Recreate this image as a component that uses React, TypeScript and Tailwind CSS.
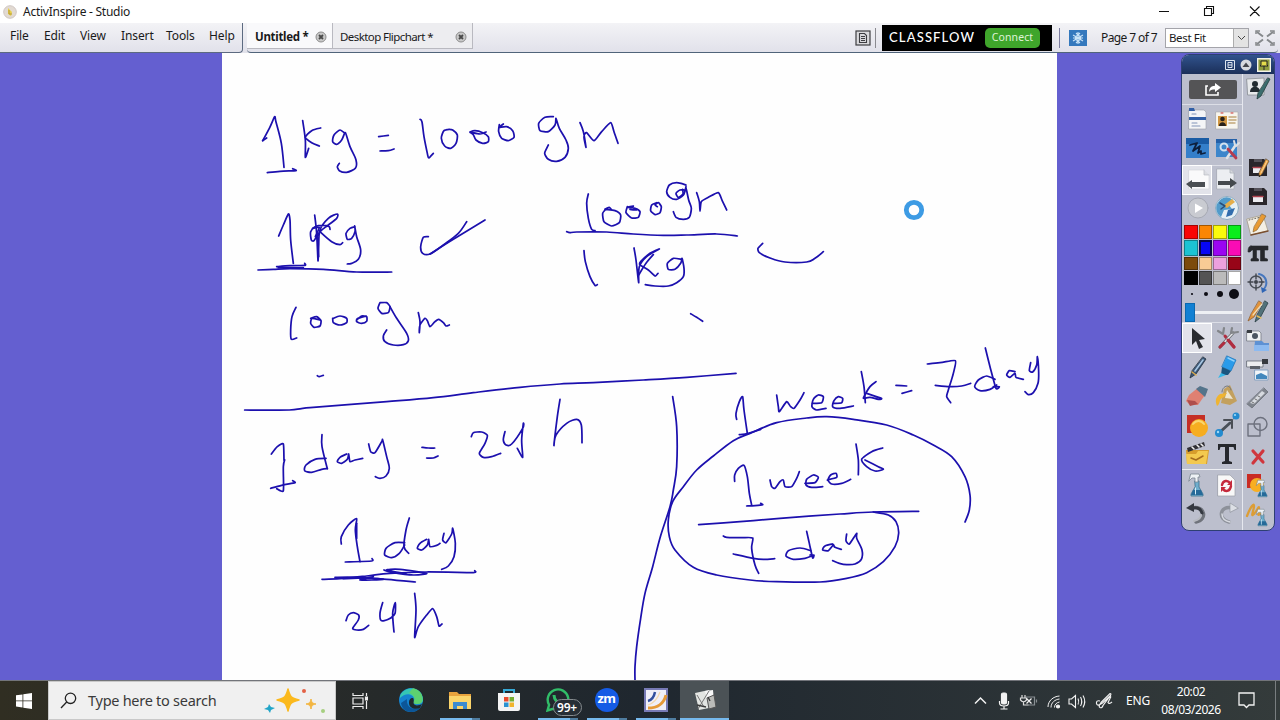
import type {ReactNode} from "react";

type InkGroup = {x: number; y: number; strokes: string[]};

// pen samples are stored at 3x board resolution, relative to the group's origin
const INK: InkGroup[] = [
  {x: 240, y: 100, strokes: [
    "68,122 88,85 104,50 108,66 124,130 132,202", "82,218 120,214 168,212 158,206", "68,122 80,114",
    "188,62 196,120 196,172 206,145", "242,84 215,92 196,112 215,128 238,138",
    "315,100 300,90 282,105 278,125 290,133 305,120 316,98 330,140 348,180 346,205 320,217 298,212 292,200 298,190",
    "416,110 445,106", "420,153 445,152 462,147",
    "540,58 546,66 552,110 562,160 566,174 580,160",
    "630,88 612,92 604,115 614,138 632,145 648,130 652,105 638,90 626,88",
    "690,96 705,92 728,98 745,110 745,125 728,130 708,120 700,104 690,96 720,102 738,96",
    "778,74 776,95 785,115 805,122 822,112 818,92 800,80 778,82 790,72",
    "940,50 915,52 896,70 900,92 925,95 945,75 948,55 958,85 978,120 985,145 975,172 950,184 925,178 914,160 920,145 925,135",
    "1020,68 1030,95 1038,142 1032,110 1040,98 1062,122 1085,95 1112,68 1122,95 1134,130",
    "116,408 130,375 145,342 150,360 152,420 160,490", "110,500 150,497 195,496 194,490",
    "54,510 100,508 150,506 250,508 350,516 455,516", "115,503 190,503",
    "224,345 230,400 234,482 236,440 240,390 265,355 292,342 290,355 265,375 240,395 222,422 214,420 212,395 225,380 250,376 268,380 270,388",
    "240,395 275,425 300,434 308,428", "232,400 236,470", "218,385 238,382 226,410",
    "345,380 330,385 318,400 322,418 335,415 345,395 344,378 350,410 362,450 355,478 335,490 322,492",
    "565,410 550,412 542,440 548,460 570,462 610,435 655,400 680,365", "570,462 640,418 735,360",
    "168,622 156,650 152,690 154,718 170,714",
    "212,655 230,650 243,662 240,678 222,682 212,670 216,655 240,660",
    "280,655 300,648 320,655 320,668 300,675 280,668 278,655",
    "350,660 365,648 380,650 380,664 365,670 350,665 352,656 378,648",
    "420,608 414,625 425,640 445,638 450,620 440,608 420,608",
    "450,620 470,655 500,700 505,722 490,734 460,735 435,725 430,708 440,690",
    "535,638 540,665 538,698 540,675 555,655 562,662 570,680 585,665 596,658 610,668 618,678 628,675",
    "232,827 238,830 250,826",
  ]},
  {x: 540, y: 160, strokes: [
    "145,102 140,130 145,175 155,208 165,212",
    "80,215 90,218 110,216 200,216 280,222 370,226 440,225 530,222 592,228",
    "200,145 188,160 192,185 215,198 238,188 242,165 225,152 195,148 208,142 215,150",
    "262,140 258,158 275,174 295,172 300,155 285,145 262,142 280,138 270,148 290,150",
    "350,128 335,135 332,152 345,164 360,158 364,140 355,128 345,135 352,140",
    "438,75 410,68 388,75 380,95 390,112 410,118 430,105 438,80 435,90 420,90 408,100 415,112 432,100 438,85 446,120 454,145 448,172 430,178 408,172 400,155",
    "428,88 430,104", "470,98 478,125 480,154 484,125 505,112 535,98 548,125 560,150",
    "132,272 136,305 150,350 165,376 172,374",
    "282,264 288,300 296,368 298,320 320,290 358,267 330,280 302,305 300,315 325,330 345,348 354,340",
    "296,345 318,310 340,284",
    "425,298 400,295 382,310 385,328 405,328 422,310 426,295 432,325 430,350 410,368 385,378 345,378 316,374",
    "668,250 654,265 658,278 690,294 735,306 800,306 825,295 850,275",
    "452,461 470,472 488,484",
  ]},
  {x: 240, y: 380, strokes: [
    "14,90 148,90 210,83 440,65 580,53 700,38 840,22 960,12 1060,8 1210,0 1340,-8 1488,-20",
    "94,222 112,200 130,192 132,240 134,240 130,260 130,332 110,326", "92,325 125,316 165,308 158,302",
    "246,164 246,200 262,266", "258,235 225,238 198,255 194,272 215,277 245,268 262,266",
    "320,222 300,232 292,245 305,250 322,238 326,222 330,245 345,240 368,235",
    "386,192 392,215 405,218 425,185 428,180 440,230 448,265 438,288 420,295 406,290",
    "546,202 565,204 584,204", "560,234 580,234 594,228",
    "694,170 700,158 725,156 742,166 735,190 718,220 730,232 755,230 782,220",
    "795,155 790,180 798,195 815,192 848,145 850,130 845,180 848,232 832,205",
    "960,58 952,110 942,196 948,165 980,130 1010,118 1024,135 1026,188",
    "304,492 304,470 325,435 350,416 346,450 352,500 360,545", "316,546 395,543 396,536", "350,430 350,475",
    "508,414 498,450 492,500 506,520", "494,488 465,488 438,505 434,525 455,533 478,520 494,495",
    "560,478 540,490 532,505 545,510 562,495 566,478 570,500 590,496 600,490",
    "612,460 608,480 618,488 635,462 638,445 646,490 642,530 625,558 605,568",
    "246,598 300,596 380,588 450,580 560,576 700,578 704,572",
    "432,570 460,578 520,585 560,580 480,568 440,570 500,582",
    "285,592 350,592 440,598 526,606", "310,596 380,594 430,598 360,600 400,590",
    "318,722 325,705 340,698 356,705 355,720 338,745 350,750 370,748 386,736",
    "428,668 420,700 424,722 445,718 465,700 466,668 458,700 462,756",
    "524,640 528,690 524,772 535,740 560,705 578,686 590,710 597,738 606,732",
  ]},
  {x: 640, y: 340, strokes: [
    "98,170 110,260 110,380 100,450 90,500 60,594 38,680 15,760 2,835 -10,920 -15,980 -15,1020",
    "975,546 988,510 990,465 975,410 935,350 880,315 820,285 740,255 640,238 560,230 500,234 410,248 330,280 280,302 220,348 170,390 130,440 98,485 85,540 88,590 105,630 160,682 230,705 330,720 410,725 540,726 620,715 680,698 730,665 765,620 776,580 768,545 745,525 700,516",
    "176,554 300,545 420,535 600,522 700,516 836,514",
    "290,238 288,220 298,185 308,170 312,210 322,280", "298,284 325,280 362,268",
    "410,165 415,200 418,215 440,185 452,200 462,205 480,180 492,158",
    "516,190 545,188 550,170 535,165 520,178 516,200 530,210 558,205",
    "582,190 605,188 608,175 595,170 582,182 578,200 600,205 640,198",
    "664,95 672,140 676,188", "708,125 690,140 672,170 672,175 690,172 715,178 724,175 680,160",
    "768,136 800,138", "786,160 815,152",
    "862,72 900,68 946,62 940,100 925,150 920,170 932,188", "886,136 930,140 965,138 992,130",
    "1036,24 1050,80 1068,145 1078,140 1060,140", "1065,118 1040,108 1015,120 1004,140 1020,152 1050,148 1070,135",
    "1125,95 1108,92 1100,105 1110,112 1125,100 1128,112 1150,118",
    "1172,68 1168,92 1178,96 1190,75 1192,50 1196,95 1194,130 1180,158 1165,164 1155,155",
    "284,424 284,405 295,385 312,376 322,410 328,460 335,495", "320,498 345,497 368,494 362,490",
    "390,420 395,440 405,445 420,425 430,420 435,440 455,440 470,415 478,395",
    "495,430 525,428 535,412 520,405 500,418 498,435 515,442 548,440",
    "562,420 590,412 588,400 572,405 564,420 575,432 605,430 632,418",
    "648,312 655,360 655,404", "728,324 695,335 665,358 680,380 705,393 730,388 715,380 675,360",
    "250,588 260,592 300,593 338,594 335,625 345,675 356,700", "280,642 340,655 370,658 404,656",
    "500,574 508,610 518,654 522,645 510,645", "512,632 480,624 445,632 438,648 460,658 495,655 515,648",
    "578,612 555,618 548,630 565,632 580,615 585,622 604,628",
    "620,582 618,602 628,612 650,580 650,595 666,630 664,658 645,672 620,674 598,670 578,662",
  ]},
];

// Catmull-Rom through the samples, tighter where the pen turns sharply
function smooth(stroke: string) {
  const p = stroke.split(" ").map(s => s.split(",").map(Number));
  const tangent = (i: number) => {
    const a = p[i - 1] ?? p[i], b = p[i], c = p[i + 1] ?? p[i];
    const ux = b[0] - a[0], uy = b[1] - a[1], vx = c[0] - b[0], vy = c[1] - b[1];
    const cos = (ux * vx + uy * vy) / (Math.hypot(ux, uy) * Math.hypot(vx, vy) || 1);
    const k = cos > 0.7 ? 6 : 10;
    return [(c[0] - a[0]) / k, (c[1] - a[1]) / k];
  };
  let d = `M${p[0][0]} ${p[0][1]}`;
  for (let i = 0; i < p.length - 1; i++) {
    const b = p[i], c = p[i + 1];
    const t = tangent(i), u = tangent(i + 1);
    d += `C${b[0] + t[0]} ${b[1] + t[1]} ${c[0] - u[0]} ${c[1] - u[1]} ${c[0]} ${c[1]}`;
  }
  return d;
}

function Board() {
  return (
    <svg viewBox="222 53 835 627" className="w-[835px] h-[627px] shrink-0 bg-[#fefefe]">
      {INK.map((g, i) => (
        <g key={i} transform={`translate(${g.x} ${g.y}) scale(0.33333)`} fill="none" stroke="#1c10ae" strokeWidth="5.2" strokeLinecap="round" strokeLinejoin="round">
          {g.strokes.map((s, j) => <path key={j} d={smooth(s)} />)}
        </g>
      ))}
      <circle cx="914" cy="210" r="7.7" fill="none" stroke="#3d9be4" strokeWidth="4.8" />
    </svg>
  );
}

function TabClose() {
  return (
    <svg viewBox="0 0 12 12" className="size-3">
      <circle cx="6" cy="6" r="5" fill="#c9c9c9" stroke="#8d8d8d" />
      <path d="M4 4l4 4M8 4l-4 4" stroke="#4a4a4a" strokeWidth="1.8" />
    </svg>
  );
}

function TitleBar() {
  return (
    <div className="h-[23px] flex items-center bg-white pl-[3px]">
      <svg viewBox="0 0 14 14" className="size-[14px]">
        <circle cx="7" cy="7" r="6.3" fill="#e2dad2" stroke="#d0c6c2" />
        <path d="M5 3l4 4-1 4-3-2z" fill="#e6cf4c" />
        <path d="M6 5v4h3" fill="none" stroke="#b89a35" />
      </svg>
      <span className="ml-[6px] text-[12px] tracking-[-0.25px]">ActivInspire - Studio</span>
      <svg viewBox="0 0 120 20" className="ml-auto mr-[10px] w-[120px] h-5" fill="none" stroke="#111" strokeWidth="1.1">
        <path d="M9 9.500h10M54.500 6.500h7v7h-7zM56.500 6.500v-2h7v7h-2M100 4.500l9.500 9.500M109.500 4.500l-9.500 9.500" />
      </svg>
    </div>
  );
}

function MenuBar() {
  return (
    <div className="h-[30px] flex bg-gradient-to-b from-[#f3f3f6] to-[#e1e1ea]">
      <div className="w-[243px] h-[30px] flex pl-[10px] pt-[4px] text-[12px] tracking-[-0.1px] border-r border-b border-[#5c6a80] rounded-br">
        <span className="w-[34px]">File</span>
        <span className="w-9">Edit</span>
        <span className="w-[41px]">View</span>
        <span className="w-[45px]">Insert</span>
        <span className="w-[43px]">Tools</span>
        <span>Help</span>
      </div>
      <div className="flex-1 ml-1 mr-[2px] flex border-b border-[#50647a] rounded-b">
        <div className="w-[86px] h-[26px] bg-[#f9f9fb] border-b border-r border-[#b9b9c0] flex items-center pl-2 pr-[5px] justify-between text-[11.5px] pt-[3px]">
          <span className="font-bold tracking-[-0.3px] whitespace-nowrap">Untitled *</span>
          <TabClose />
        </div>
        <div className="w-[140px] h-[26px] bg-[#ededf0] border-b border-r border-[#b9b9c0] flex items-center pl-[7px] pr-[5px] justify-between text-[11.5px] tracking-[-0.58px] pt-[3px]">
          <span>Desktop Flipchart *</span>
          <TabClose />
        </div>
        <div className="ml-auto flex items-center h-[29px]">
          <svg viewBox="0 0 16 16" className="size-4" fill="none" stroke="#3e3e42">
            <rect x="1" y="1" width="14" height="14" fill="#dadadd" strokeWidth="1.2" />
            <path d="M4.500 3.500h5l2 2v7h-7zM6 6.500h4M6 8.500h4M6 10.500h4" strokeWidth="1.1" />
          </svg>
          <div className="w-px h-5 bg-[#8a8a90] ml-1" />
          <div className="ml-[6px] w-[170px] h-[26px] bg-black flex items-center pl-[7px] text-white">
            <span className="font-[Lato] font-medium text-[13px] tracking-[1.15px] w-[96px]">CLASSFLOW</span>
            <span className="w-[55px] h-5 rounded-[5px] bg-[#3fa52b] text-[10.5px] tracking-[0.1px] flex items-center justify-center text-[#dff3d8]">Connect</span>
          </div>
          <div className="w-px h-5 bg-[#7d7da0] ml-[7px]" />
          <svg viewBox="0 0 18 16" className="w-[18px] h-4 ml-[9px]">
            <rect width="18" height="16" fill="#3478bd" />
            <g fill="none" stroke="#c9e3f7" strokeWidth="1.1">
              <circle cx="9" cy="8" r="2.500" />
              <path d="M9 2v12M4 5l10 6M4 11l10-6M7 3l2 2 2-2M7 13l2-2 2 2M4 8h10" />
            </g>
          </svg>
          <span className="ml-[14px] w-[64px] text-[12px] tracking-[-0.6px] whitespace-nowrap">Page 7 of 7</span>
          <div className="w-[84px] h-5 border border-[#a4a4aa] bg-white flex items-center justify-between pl-[3px] text-[11.5px] tracking-[-0.35px]">
            <span>Best Fit</span>
            <span className="w-[15px] h-[18px] bg-[#e3e3e3] border-l border-[#adadad] flex items-center justify-center">
              <svg viewBox="0 0 9 6" className="w-[9px] h-[6px]"><path d="M1 1l3.500 3.500L8 1" fill="none" stroke="#444" /></svg>
            </span>
          </div>
          <svg viewBox="0 0 20 16" className="w-5 h-4 ml-[6px] mr-[3px]" fill="none" stroke="#85888b" strokeWidth="2">
            <path d="M2 2l6 4.500M18 2l-6 4.500M2 14l6-4.500M18 14l-6-4.500" />
            <path d="M1 4V1h4M19 4V1h-4M1 12v3h4M19 12v3h-4" strokeWidth="1.500" />
          </svg>
        </div>
      </div>
    </div>
  );
}

function Icon({children, on}: {children: ReactNode; on?: boolean}) {
  return (
    <svg viewBox="0 0 28 28" className={on ? "size-7 bg-[#e2e3ea] outline outline-white" : "size-7"} strokeLinecap="round" strokeLinejoin="round">
      {children}
    </svg>
  );
}

function Floppy() {
  return (
    <g>
      <path d="M5 6h15l3 3v14H5z" fill="#29262b" />
      <rect x="9" y="14" width="10" height="6" fill="#ececf0" />
      <path d="M9 14.500h10" stroke="#b0434f" strokeWidth="1.500" />
      <path d="M10 6h8v3h-8z" fill="#55525a" />
    </g>
  );
}

function Spray() {
  return (
    <g>
      <path d="M12 10h4v6l4 7v2H8v-2l4-7z" fill="#6faecd" stroke="#3d718e" strokeWidth=".8" />
      <path d="M10 19h8l2 5H8z" fill="#256a99" />
      <path d="M8 3h8l1 3h-2v5h-3V7H9L6 10z" fill="#eef2f5" stroke="#7c8993" strokeWidth=".8" />
      <path d="M12.500 17v6" stroke="#d5edf6" />
    </g>
  );
}

function Pencil({color}: {color: string}) {
  return (
    <g>
      <path d="M22 6l3 2-7 13-3 3v-4z" fill={color} stroke="#5a4937" strokeWidth=".7" />
      <path d="M23 8l-6 12" stroke="#fff" strokeOpacity=".6" strokeWidth=".9" />
      <path d="M15 24v-2l2 1z" fill="#222" />
    </g>
  );
}

const COLORS = [
  "bg-[#f90505]", "bg-[#fb8604]", "bg-[#fbfb0c]", "bg-[#0aed1c]",
  "bg-[#1cc3d3]", "bg-[#0606f4]", "bg-[#9a05f2]", "bg-[#f90cb5]",
  "bg-[#7c4b0b]", "bg-[#f8cb95]", "bg-[#eca0dd]", "bg-[#980518]",
  "bg-black", "bg-[#545454]", "bg-[#bbbbbb]", "bg-white",
];

function Palette() {
  return (
    <div className="absolute left-[1181px] top-[54px] w-[94px] h-[477px] rounded-lg bg-[#bcbfcd] border border-[#2e3f73] overflow-hidden flex flex-col">
      <div className="h-[19px] shrink-0 bg-gradient-to-b from-[#31538d] to-[#1b2f59] flex items-center justify-end gap-[5px] pr-[3px]">
        <svg viewBox="0 0 10 10" className="size-[10px]" fill="none" stroke="#dce4ef">
          <path d="M.500.500h9v9h-9zM3 2.500h4v5H3zM3 5h4" />
        </svg>
        <svg viewBox="0 0 12 12" className="size-3">
          <circle cx="6" cy="6" r="5.500" fill="#d8dade" />
          <path d="M2.500 8L6 3.500 9.500 8z" fill="#45474c" />
        </svg>
        <svg viewBox="0 0 14 14" className="size-[14px]">
          <path d="M.700.700h12.600v12.600H.700z" fill="#8e9b3e" stroke="#f4f4e8" strokeWidth="1.400" />
          <path d="M4 3h6v4l1 1H3l1-1zM7 8v4" fill="#e4dc4c" stroke="#222" />
        </svg>
      </div>
      <div className="flex-1 flex">
        <div className="w-[60px] flex flex-col">
          <div className="h-[30px] flex items-center justify-center pl-[2px]">
            <div className="w-12 h-[19px] rounded-xs bg-[#545456] flex items-center justify-center">
              <svg viewBox="0 0 18 14" className="w-[18px] h-[14px]">
                <path d="M4 4H2v9h12v-3" fill="none" stroke="#fff" strokeWidth="1.600" />
                <path d="M11 1l6 4.500-6 4.500V7.500c-3 0-5 .5-6 2.500 0-4 2-6 6-6.300z" fill="#fff" />
              </svg>
            </div>
          </div>
          <div className="h-px bg-[#dcdee6]" />
          <div className="h-[60px] grid grid-cols-2 justify-items-center content-start gap-y-[2px]">
            <Icon>
              <path d="M6 5h15l2 2v17H6z" fill="#f4f5f7" stroke="#9a9fa8" strokeWidth=".6" />
              <path d="M6 3h5l1 3H6z" fill="#315fa6" />
              <path d="M6 12h17v3H6z" fill="#315fa6" />
              <path d="M9 9h4M9 18h5M9 21h8" stroke="#8094b8" strokeWidth="1.100" />
            </Icon>
            <Icon>
              <path d="M3 7h22v17H3z" fill="#f7f5ee" stroke="#a9a9a9" strokeWidth=".6" />
              <path d="M5 11h9v10H5z" fill="#cf9541" />
              <circle cx="9.500" cy="14" r="2.300" fill="#282119" />
              <path d="M6 21c0-5 7-5 7 0z" fill="#282119" />
              <path d="M16 12h7M16 15h7M16 18h6" stroke="#c2a778" strokeWidth="1.500" />
              <path d="M8 8h2M18 8h2" stroke="#c33" />
            </Icon>
            <Icon>
              <path d="M3 3h23v20H3z" fill="#347fca" />
              <path d="M3 3h23v6H3z" fill="#195ba4" />
              <path d="M7 10l7-2-4 8 7-5-2 7 3-2 0 3 4-1" fill="none" stroke="#0d1f3c" strokeWidth="1.800" />
            </Icon>
            <Icon>
              <path d="M3 4h21v18H3z" fill="#3d86cb" />
              <path d="M3 4h21v4H3z" fill="#2460a8" />
              <circle cx="11" cy="12" r="3.500" fill="none" stroke="#d3e2ef" strokeWidth="2" />
              <path d="M14 23L22 11" stroke="#dfe2e6" strokeWidth="2.600" />
              <path d="M15 14l8 9" stroke="#b63c50" strokeWidth="2.800" />
              <path d="M22 10l-1-4M23 11l3-3" stroke="#dde1e5" strokeWidth="2" />
            </Icon>
          </div>
          <div className="h-px bg-[#dcdee6]" />
          <div className="h-[59px] grid grid-cols-2 justify-items-center content-start">
            <Icon on>
              <path d="M6 4h15l5 5v14H6z" fill="#fafafb" stroke="#d5d7dc" strokeWidth=".7" />
              <path d="M21 4v5h5" fill="#dcdde2" stroke="#b9bcc4" strokeWidth=".7" />
              <path d="M3 18l6-4v2h13v5H9v2z" fill="#4b4f53" />
            </Icon>
            <Icon>
              <path d="M4 3h13l4 4v16H4z" fill="#eceef2" stroke="#a7acb5" strokeWidth=".7" />
              <path d="M17 3v4h4" fill="#d6d8de" stroke="#a7acb5" strokeWidth=".7" />
              <path d="M5 15h12v-3l7 5-7 5v-3H5z" fill="#454a4e" />
            </Icon>
            <Icon>
              <circle cx="15" cy="14" r="10" fill="#c9cbd1" stroke="#a7aab4" />
              <path d="M12 9.500l8 4.500-8 5z" fill="#fff" />
            </Icon>
            <Icon>
              <circle cx="14" cy="14" r="11.500" fill="#e6f0f5" stroke="#8cabc0" />
              <path d="M4 10c5-8 11-8 16-4l-4 5 3 4-8 1-3 7c-4-3-6-8-4-13z" fill="#529bca" />
              <path d="M10 12l9-7 3 3-8 6z" fill="#e4ae4b" />
              <path d="M15 16l7-2-3 7-6 2z" fill="#316dad" />
              <path d="M7 9l5 3-4 3" stroke="#274e7b" strokeWidth="1.500" fill="none" />
            </Icon>
          </div>
          <div className="h-[60px] pl-[2px] pr-px grid grid-cols-4 gap-px">
            {COLORS.map((c, i) => (
              <div key={i} className={`${c} ${i === 5 ? "border-2 border-[#06064c]" : "border border-black/35"}`} />
            ))}
          </div>
          <svg viewBox="0 0 60 17" className="h-[17px] w-[60px] shrink-0" fill="#0d0d14">
            <circle cx="10" cy="9" r="1.100" /><circle cx="24" cy="9" r="2" />
            <circle cx="38" cy="9" r="3" /><circle cx="52" cy="9" r="5" />
          </svg>
          <div className="h-[20px] flex items-center pl-[3px]">
            <div className="w-[10px] h-[19px] bg-[#1180d3] border border-[#0b69b0]" />
            <div className="flex-1 h-[3px] bg-[#eef0f4]" />
          </div>
          <div className="h-px bg-[#dcdee6]" />
          <div className="h-[146px] grid grid-cols-2 justify-items-center content-start gap-y-px pt-px">
            <Icon on>
              <path d="M9 4l13 11-6 1 4 7-4 2-3-8-4 4z" fill="#292b2f" />
            </Icon>
            <Icon>
              <path d="M12 12l9 11" stroke="#b02d40" strokeWidth="3" />
              <path d="M20 9L7 23" stroke="#6d7176" strokeWidth="3.200" />
              <path d="M20 9L7 23" stroke="#e4e6e9" strokeWidth="1.500" />
              <path d="M15 16l6 7M11 19l-4 4" stroke="#b02d40" strokeWidth="3" />
              <path d="M5 7l5 3 1-6M19 4l-1 5 7-1" fill="none" stroke="#83868a" strokeWidth="2.200" />
            </Icon>
            <Icon>
              <path d="M20 4l3 2-10 15-6 4 2-7z" fill="#3c5877" stroke="#24313f" strokeWidth=".8" />
              <path d="M20 7L12 18" stroke="#a9c8e3" strokeWidth="1.600" />
              <path d="M9 19l4 3" stroke="#dcab49" strokeWidth="1.500" />
            </Icon>
            <Icon>
              <path d="M14 3l9 4-5 11-9-4z" fill="#2a9bea" stroke="#2279bd" strokeWidth=".8" />
              <path d="M9 14l9 4-3 4H8z" fill="#1c567f" />
              <path d="M8 20l5 2-8 3z" fill="#36b8e8" />
              <path d="M15 5l6 3" stroke="#8ed0fa" strokeWidth="1.500" />
            </Icon>
            <Icon>
              <path d="M6 13L16 5l8 5-9 13H7l-4-4z" fill="#df8072" />
              <path d="M13 7l4-3 8 3-3 8z" fill="#54748b" />
              <path d="M4 18l8 1 3 3-8 2z" fill="#ae4d4b" />
            </Icon>
            <Icon>
              <path d="M11 7l6-4 7 16-7 4-9-2z" fill="#c3a05d" />
              <path d="M14 8l6 9-8-1z" fill="#eee6cf" />
              <path d="M7 12c-6 4-4 9-3 12 4-2 1-7 7-9l3-4z" fill="#efb432" />
              <path d="M9 10c0-6 8-9 9-2" stroke="#77787a" fill="none" />
            </Icon>
            <Icon>
              <path d="M4 4h18v18H4z" fill="#c52f25" />
              <circle cx="16" cy="17" r="9" fill="#f6ad20" />
              <path d="M10 13c3-4 8-4 11 0" stroke="#fad66e" fill="none" strokeWidth="2" />
            </Icon>
            <Icon>
              <path d="M7 21L17 12" stroke="#494f57" strokeWidth="3" />
              <path d="M11 9h8v8" fill="none" stroke="#4a4e55" strokeWidth="2" />
              <path d="M19 9l5-4" stroke="#5f656e" />
              <circle cx="6" cy="22" r="4" fill="#238bcf" /><circle cx="23" cy="5" r="3.500" fill="#238bcf" />
              <circle cx="5" cy="21" r="1.200" fill="#a1daf6" /><circle cx="22" cy="4" r="1.100" fill="#a1daf6" />
            </Icon>
            <Icon>
              <path d="M3 10h23l-2 14H4z" fill="#d79d2c" />
              <path d="M3 14h10l2-3h10l-2 13H4z" fill="#f3c94f" />
              <path d="M4 8l17-6 1 4-17 6z" fill="#313136" />
              <path d="M9 7l2 2M14 5l2 2M18 4l2 2" stroke="#f1f1f1" strokeWidth="1.600" />
              <path d="M8 18l5 2 7-4" fill="none" stroke="#a66d1e" strokeWidth="1.500" />
            </Icon>
            <Icon>
              <path d="M5 4h18v6h-1.500l-1-3H16v14l3 1v2H9v-2l3-1V7H7.500l-1 3H5z" fill="#26282d" />
            </Icon>
          </div>
          <div className="h-px bg-[#eceef2]" />
          <div className="grid grid-cols-2 justify-items-center content-start gap-y-px pt-px">
            <Icon><Spray /></Icon>
            <Icon>
              <path d="M5 4h12l5 5v16H5z" fill="#f8f8f8" stroke="#9ea1a9" strokeWidth=".7" />
              <path d="M9 14c1-5 6-5 8-2M18 15c-1 6-6 6-8 3" fill="none" stroke="#c5293b" strokeWidth="2.400" />
              <path d="M19 9v5h-5zM8 21v-5h5z" fill="#c5293b" />
            </Icon>
            <Icon>
              <path d="M9 8c13-3 16 12 4 14" fill="none" stroke="#6f737b" strokeWidth="3.500" />
              <path d="M3 8l8-5v9z" fill="#353941" />
              <path d="M10 8c6-1 8 2 9 5" fill="none" stroke="#353941" strokeWidth="3" />
              <path d="M18 15c0 3-3 5-7 6" fill="none" stroke="#b6b9c0" strokeWidth="2" />
            </Icon>
            <Icon>
              <path d="M19 8C7 5 4 19 16 22" fill="none" stroke="#8d919a" strokeWidth="3.500" />
              <path d="M25 8l-8-5v9z" fill="#dcdfe5" stroke="#9498a1" strokeWidth=".7" />
              <path d="M9 14c0 4 3 7 8 8" fill="none" stroke="#d6d9e0" strokeWidth="1.500" />
            </Icon>
          </div>
        </div>
        <div className="w-px bg-[#e6e8ef]" />
        <div className="flex-1 flex flex-col items-center pr-[2px]">
          <div className="h-[79px]">
            <Icon>
              <path d="M3 5l17-1v17H4z" fill="#e7e9eb" stroke="#8b9096" strokeWidth=".8" />
              <circle cx="11" cy="10" r="3" fill="#222b31" />
              <path d="M6 18c0-7 10-7 10 0z" fill="#222b31" />
              <path d="M24 4l2 1-9 17-4 3 1-6z" fill="#3b6d6e" stroke="#223c3c" strokeWidth=".8" />
            </Icon>
          </div>
          <div className="flex flex-col gap-[0.9px]">
            <Icon><Floppy /><Pencil color="#eda13b" /></Icon>
            <Icon><Floppy /></Icon>
            <Icon>
              <path d="M3 8l16-4 5 16-17 4z" fill="#f3efe5" stroke="#a89f8c" strokeWidth=".8" />
              <path d="M5 9L17 6" stroke="#69665f" strokeDasharray="1 2" />
              <path d="M18 3l4 2-9 14-4 2 1-5z" fill="#e89a33" stroke="#805c2d" strokeWidth=".6" />
              <path d="M7 24l17-4" stroke="#7a4f31" strokeWidth="1.500" />
            </Icon>
            <Icon>
              <path d="M7 6h17v4h-3.500v8l3 1v2h-7V10h-4v8l2 1v2H7v-2l2-1v-8H8l-2 2H4c0-4 1-6 3-6z" fill="#27282d" stroke="#27282d" strokeWidth=".6" />
            </Icon>
            <Icon>
              <circle cx="12" cy="13" r="6" fill="none" stroke="#4b5059" strokeWidth="1.500" />
              <circle cx="12" cy="13" r="2" fill="#3f444c" />
              <path d="M12 5v5M12 16v5M4 13h5M15 13h5" stroke="#42464e" strokeWidth="1.400" />
              <path d="M15 5c8 2 9 10 5 15" fill="none" stroke="#4676bd" strokeWidth="2" />
              <path d="M17 18l1 6 5-3z" fill="#2f65b5" />
            </Icon>
            <Icon>
              <path d="M15 4l3 2-8 14-6 4 3-7z" fill="#e2933b" stroke="#8d5c2b" strokeWidth=".7" />
              <path d="M21 4l3 2-8 15-5 4 2-7z" fill="#52727a" stroke="#293d43" strokeWidth=".8" />
              <path d="M18 7l-9 11" stroke="#eedeb9" strokeWidth="1.200" />
              <path d="M13 19l4 2" stroke="#dfb95e" strokeWidth="1.500" />
            </Icon>
            <Icon>
              <path d="M3 5h12l2 2v8H3z" fill="#eef0f2" stroke="#777c85" strokeWidth=".8" />
              <path d="M3 4h5v3H3z" fill="#383c42" />
              <circle cx="11" cy="10" r="3" fill="#4b5561" />
              <path d="M11 15h7l2 2h5v8H10z" fill="#5e91d3" />
              <path d="M10 19h15v6H10z" fill="#8dbaf0" />
            </Icon>
            <Icon>
              <path d="M3 6h16v6H3z" fill="#edeef0" stroke="#666b75" strokeWidth=".8" />
              <path d="M18 4h6v5h-6z" fill="#36393f" />
              <path d="M6 11h10v3H6z" fill="#5d626a" />
              <path d="M11 15h13v10H11z" fill="#f2f5f8" stroke="#84a1c2" />
              <path d="M12 20l5-2 6 3v3H12z" fill="#4388bd" />
            </Icon>
            <Icon>
              <path d="M20 4l4 4L8 24l-5-4z" fill="#7f848d" stroke="#5d626a" strokeWidth=".6" />
              <path d="M18 7l3 2L10 20l-4-1z" fill="#d7dae0" />
              <path d="M8 18l2 1M11 15l2 1M14 12l2 1" stroke="#555" strokeWidth=".8" />
            </Icon>
            <Icon>
              <g fill="none" stroke="#6d717e" strokeWidth="1.400"><path d="M4 11h12v12H4z" /><circle cx="16.500" cy="11" r="6.500" /></g>
            </Icon>
            <Icon>
              <path d="M9 9l10 11M19 9L9 21" stroke="#d0363d" strokeWidth="3.200" />
            </Icon>
            <Icon>
              <path d="M3 3h14v14H3z" fill="#c92b23" />
              <circle cx="13" cy="14" r="7" fill="#f7ae22" />
              <g transform="translate(8 7) scale(.75)"><Spray /></g>
            </Icon>
            <Icon>
              <path d="M3 16C6 8 10 2 10 6s-4 12 0 8 5-10 5-5-3 8 3 4" fill="none" stroke="#dc9d35" strokeWidth="2.300" />
              <g transform="translate(8 7) scale(.75)"><Spray /></g>
            </Icon>
          </div>
        </div>
      </div>
    </div>
  );
}

function TaskItem({children, active, open}: {children: ReactNode; active?: boolean; open?: boolean}) {
  return (
    <div className={`w-[49px] h-full flex flex-col items-center ${active ? "bg-[#4b5256]" : ""}`}>
      <div className="flex-1 flex items-center">{children}</div>
      <div className={`h-[2px] ${active ? "w-full bg-[#76b9ed]" : open ? "w-10 bg-gradient-to-r from-[#76b9ed] from-80% to-[#4f7da0] to-80%" : "w-10"}`} />
    </div>
  );
}

function Taskbar() {
  return (
    <div className="h-10 flex bg-gradient-to-r from-[#302e22] via-[#1f272f] to-[#343b3b] border-t border-[#72747a] text-white">
      <div className="w-12 flex items-center justify-center">
        <svg viewBox="0 0 16 16" className="size-4" fill="#fff">
          <path d="M0 2.300L6.500 1.400v6.100H0zM7.300 1.300L16 0v7.500H7.300zM0 8.300h6.500v6.200L0 13.600zM7.300 8.300H16V16l-8.700-1.300z" />
        </svg>
      </div>
      <div className="w-[288px] h-[39px] bg-[#f0f0f0] border border-[#c9c9c9] flex items-center pl-[11px] text-[#3a3a3a]">
        <svg viewBox="0 0 17 17" className="size-[17px]" fill="none" stroke="#222" strokeWidth="1.300">
          <circle cx="10.500" cy="6.300" r="5.200" /><path d="M6.700 10L1 16" />
        </svg>
        <span className="ml-[11px] text-[14.5px] tracking-[-0.27px]">Type here to search</span>
        <svg viewBox="0 0 62 26" className="ml-auto mr-[9px] w-[62px] h-[26px]">
          <path d="M24 1c2 8 3 9 11 11-8 2-9 3-11 11-2-8-3-9-11-11 8-2 9-3 11-11z" fill="#fbb91d" stroke="#fbb91d" strokeWidth="1.500" strokeLinejoin="round" />
          <path d="M47 11c1 4 1 4 5 5-4 1-4 1-5 5-1-4-1-4-5-5 4-1 4-1 5-5z" fill="#f3b642" stroke="#f3b642" />
          <path d="M5 16l2 3 4 1-4 2-1 3-2-3-4-1 4-2z" fill="#21a5c8" />
          <circle cx="40" cy="3" r="2" fill="#e36145" /><circle cx="59" cy="23" r="2" fill="#a6cf80" />
        </svg>
      </div>
      <div className="w-[50px] flex items-center justify-center pr-[2px]">
        <svg viewBox="0 0 16 16" className="size-4" fill="none" stroke="#eee" strokeWidth="1.200">
          <path d="M1 0v2.500h10V0M1 5h10v6H1zM1 16v-2.500h10V16M14.500 0v3M14.500 8v8" /><path d="M13.500 4h2v3h-2z" fill="#eee" />
        </svg>
      </div>
      <TaskItem>
        <svg viewBox="0 0 24 24" className="size-6">
          <circle cx="12" cy="12" r="12" fill="#1583cf" />
          <path d="M1 8C5-3 24-2 24 12c0 5-9 5-9 2 0-2 1-2 0-4C12 4 5 6 1 10z" fill="#35c6b4" />
          <path d="M14 0c8 2 11 9 9 14-2 3-9 3-9 0 3-4 1-7-4-9z" fill="#6bd45a" fillOpacity=".75" />
          <path d="M8 11c-1 9 7 12 14 8-6 8-19 6-20-4z" fill="#0c5698" />
          <path d="M14 10c2 3-1 5 2 7 2 1 5 0 7-1l-2 4c-5 2-11 0-11-5 0-3 1-5 4-5z" fill="#20282d" />
        </svg>
      </TaskItem>
      <TaskItem open>
        <svg viewBox="0 0 22 20" className="w-[22px] h-5">
          <path d="M0 2h8l2 2h12v15H0z" fill="#e8a33d" /><path d="M0 6h22v13H0z" fill="#fbd56b" />
          <path d="M4 19v-7h14v7h-4v-3H8v3z" fill="#3c8bd0" />
        </svg>
      </TaskItem>
      <TaskItem>
        <svg viewBox="0 0 24 24" className="size-6">
          <path d="M7 5V2h10v3" fill="none" stroke="#35a9d6" strokeWidth="2" />
          <path d="M1 5h22v16a2 2 0 01-2 2H3a2 2 0 01-2-2z" fill="#f4f4f4" />
          <path d="M7 9h4.500v4.500H7z" fill="#e94b2b" /><path d="M12.500 9H17v4.500h-4.500z" fill="#75ad31" />
          <path d="M7 14.500h4.500V19H7z" fill="#2b92d1" /><path d="M12.500 14.500H17V19h-4.500z" fill="#f1b42b" />
        </svg>
      </TaskItem>
      <TaskItem open>
        <div className="relative">
          <svg viewBox="0 0 24 24" className="size-6" fill="none" stroke="#31bd68" strokeWidth="2.400">
            <path d="M1.500 22.500l1.600-5.600A10.300 10.300 0 1112.500 22 10 10 0 017 20.800z" />
            <path d="M8 7c0 5 4 9 9 9" strokeWidth="3" />
          </svg>
          <span className="absolute left-[7px] top-[11px] w-[29px] h-[17px] rounded-full bg-[#272e35] border border-[#858b8e] text-[12px] font-semibold leading-[15px] tracking-[-0.2px] text-center">99+</span>
        </div>
      </TaskItem>
      <TaskItem open>
        <div className="size-6 rounded-full bg-[#155be5] text-[13px] leading-[21px] font-bold tracking-[-0.5px] text-center">zm</div>
      </TaskItem>
      <TaskItem open>
        <svg viewBox="0 0 24 24" className="size-6">
          <path d="M1 1h22v22H1z" fill="#f0eff8" stroke="#777ab5" strokeWidth="2" />
          <path d="M4 13C8 12 10 9 11 4" fill="none" stroke="#324f9e" strokeWidth="2.500" />
          <path d="M4 20c10 0 16-5 18-13" fill="none" stroke="#e69a38" strokeWidth="3" />
          <path d="M4 17C10 15 14 10 16 4" fill="none" stroke="#f3d8ae" strokeWidth="1.200" />
        </svg>
      </TaskItem>
      <TaskItem active>
        <svg viewBox="0 0 24 22" className="w-6 h-[22px]">
          <path d="M2 4l14-3 5 17-15 3z" fill="#e3e5e2" /><path d="M12 2l8-1 1 11-6 2z" fill="#f7f7f7" />
          <path d="M4 6l7 12M16 2L5 20" stroke="#777" /><path d="M14 9l7-3 2 12-7 2z" fill="#babbb8" stroke="#555" />
          <path d="M15 8l2 4M4 16l9 2" stroke="#3c3c3c" strokeWidth="1.400" />
        </svg>
      </TaskItem>
      <div className="ml-auto flex items-center">
        <svg viewBox="0 0 146 24" className="w-[146px] h-6" fill="none" stroke="#f2f2f2" strokeWidth="1.200">
          <path d="M6 14.500l5.500-5.500 5.500 5.500" strokeWidth="1.500" />
          <rect x="32.500" y="4" width="5" height="11" rx="1.500" fill="#f2f2f2" /><path d="M30.500 12v2q0 3 4.500 3t4.500-3v-2M35 17v3M31.500 20h7" />
          <path d="M53 6v3M56 6v3M51.500 9h6v2q-3 3.500-6 0zM54.500 13v3h5" stroke="#ddd" />
          <path d="M57 8h8.500v8H59M67.500 10.500v3" stroke="#888e92" /><path d="M57.500 9.500l5 5M62.500 9.500l-5 5" />
          <path d="M79 18C79 12 84 7.500 90.500 7M82 18.500c0-5 4-8 8.500-8.500M85.500 18.500c0-3 2-5 5-5.500" strokeWidth="1" /><circle cx="89" cy="17.500" r="1.500" fill="#f2f2f2" />
          <path d="M100 10h2.500l4-3.500v12l-4-3.500H100zM109 9.500q1.500 3 0 6M111.500 8q2.500 4.500 0 9M114 6.500q3.500 6 0 12" strokeWidth="1.100" />
          <path d="M131 12q-4-1-3.500 2.500t6-.5l8-7.500q1-2-.5-2l-9 9q-3 4-1 5t3-2l6-8q3-2 1 1l-2 4q1 2 4-.5" />
        </svg>
        <span className="ml-[11px] w-[24px] text-[12px] tracking-[-0.2px]">ENG</span>
        <div className="ml-[11px] w-[60px] text-center text-[12px] leading-[18px] tracking-[-0.45px] whitespace-nowrap">
          <div>20:02</div>
          <div>08/03/2026</div>
        </div>
        <svg viewBox="0 0 17 17" className="ml-[17px] mr-[20px] size-[17px]" fill="none" stroke="#f2f2f2" strokeWidth="1.300">
          <path d="M1 1h15v12h-5L8.500 15.500 6 13H1z" />
        </svg>
        <div className="w-px h-[39px] bg-[#797e80] mr-1" />
      </div>
    </div>
  );
}

export default function App() {
  return (
    <div className="relative w-[1280px] h-[720px] overflow-hidden flex flex-col bg-[#645fd0] font-['Noto_Sans','Open_Sans',sans-serif] text-[#1a1a1a]">
      <TitleBar />
      <MenuBar />
      <div className="h-[627px] flex justify-center pr-px">
        <Board />
      </div>
      <Taskbar />
      <Palette />
    </div>
  );
}
